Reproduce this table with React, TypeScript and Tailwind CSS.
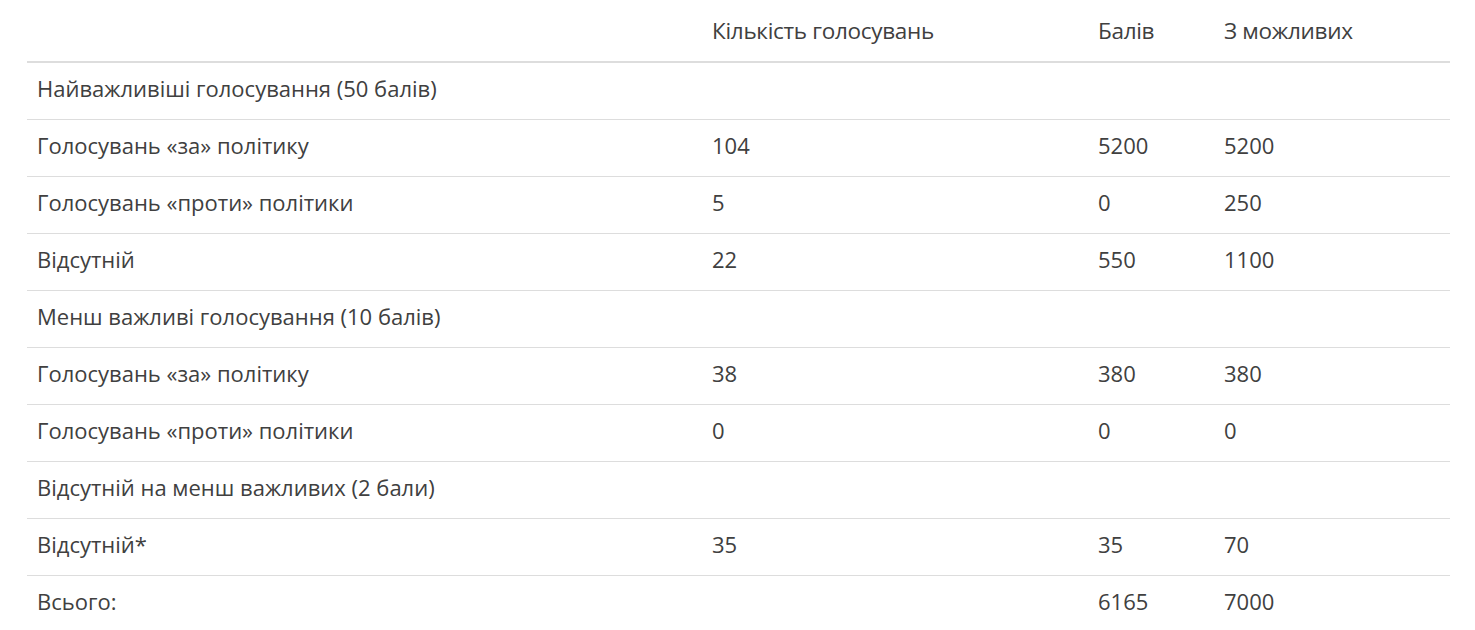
const rows: [string, string, string, string][] = [
  ['Найважливіші голосування (50 балів)', '', '', ''],
  ['Голосувань «за» політику', '104', '5200', '5200'],
  ['Голосувань «проти» політики', '5', '0', '250'],
  ['Відсутній', '22', '550', '1100'],
  ['Менш важливі голосування (10 балів)', '', '', ''],
  ['Голосувань «за» політику', '38', '380', '380'],
  ['Голосувань «проти» політики', '0', '0', '0'],
  ['Відсутній на менш важливих (2 бали)', '', '', ''],
  ['Відсутній*', '35', '35', '70'],
  ['Всього:', '', '6165', '7000'],
];

export default function App() {
  return (
    <div className="min-h-[630px] bg-white pl-[27px] pr-[25px] font-['Open_Sans',sans-serif] text-[#404040]">
      <table className="w-full border-collapse text-left text-[22px]">
        <thead>
          <tr className="h-[62px] border-b-2 border-[#dddddd]">
            <th className="w-[675px]" />
            <th className="w-[386px] pl-[10px] text-[22.5px] font-normal tracking-[-0.3px]">Кількість голосувань</th>
            <th className="w-[126px] pl-[10px] text-[22.5px] font-normal tracking-[-0.3px]">Балів</th>
            <th className="pl-[10px] text-[22.5px] font-normal tracking-[-0.3px]">З можливих</th>
          </tr>
        </thead>
        <tbody>
          {rows.map((r, i) => (
            <tr key={i} className="h-[57px] border-b border-[#dddddd] last:border-b-0">
              {r.map((c, j) => (
                <td key={j} className="pb-[4px] pl-[10px] align-middle">
                  {c}
                </td>
              ))}
            </tr>
          ))}
        </tbody>
      </table>
    </div>
  );
}
